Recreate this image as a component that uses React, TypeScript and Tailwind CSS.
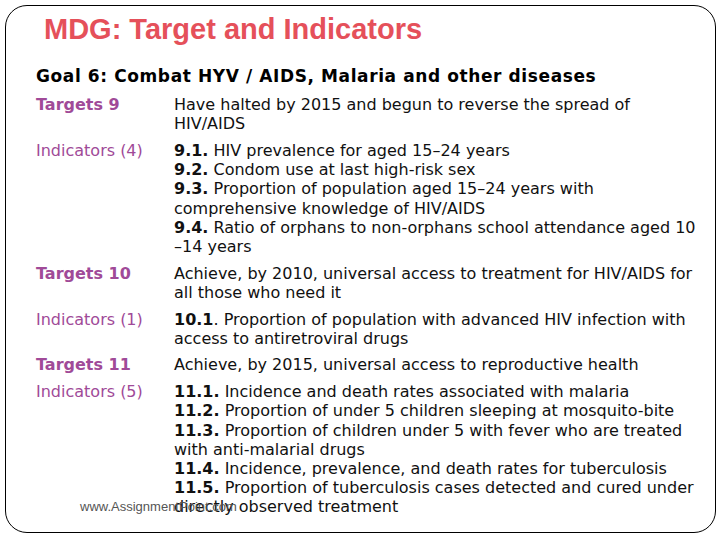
import React from "react";

type Row = {
  label: string;
  strong?: boolean;
  lines: React.ReactNode[];
};

const rows: Row[] = [
  {
    label: "Targets 9",
    strong: true,
    lines: ["Have halted by 2015 and begun to reverse the spread of", "HIV/AIDS"],
  },
  {
    label: "Indicators (4)",
    lines: [
      <><b>9.1.</b> HIV prevalence for aged 15–24 years</>,
      <><b>9.2.</b> Condom use at last high-risk sex</>,
      <><b>9.3.</b> Proportion of population aged 15–24 years with</>,
      "comprehensive knowledge of HIV/AIDS",
      <><b>9.4.</b> Ratio of orphans to non-orphans school attendance aged 10</>,
      "–14 years",
    ],
  },
  {
    label: "Targets 10",
    strong: true,
    lines: ["Achieve, by 2010, universal access to treatment for HIV/AIDS for", "all those who need it"],
  },
  {
    label: "Indicators (1)",
    lines: [
      <><b>10.1</b>. Proportion of population with advanced HIV infection with</>,
      "access to antiretroviral drugs",
    ],
  },
  {
    label: "Targets 11",
    strong: true,
    lines: ["Achieve, by 2015, universal access to reproductive health"],
  },
  {
    label: "Indicators (5)",
    lines: [
      <><b>11.1.</b> Incidence and death rates associated with malaria</>,
      <><b>11.2.</b> Proportion of under 5 children sleeping at mosquito-bite</>,
      <><b>11.3.</b> Proportion of children under 5 with fever who are treated</>,
      "with anti-malarial drugs",
      <><b>11.4.</b> Incidence, prevalence, and death rates for tuberculosis</>,
      <><b>11.5.</b> Proportion of tuberculosis cases detected and cured under</>,
      "directly observed treatment",
    ],
  },
];

export default function App() {
  return (
    <div className="w-[720px] h-[540px] bg-white p-[5px]">
      <div className="relative w-[711px] h-[528px] border border-black rounded-[22px]">
        {/* Title */}
        <h1 className="ml-[38px] mt-[6px] font-['Liberation_Sans',Arial,sans-serif] font-bold text-[29px] leading-[34px] text-[#e5505a]">
          MDG: Target and Indicators
        </h1>

        {/* Goal */}
        <h2 className="ml-[30px] mt-[20px] font-['DejaVu_Sans',Verdana,sans-serif] font-bold text-[17px] tracking-[0.6px] leading-[20px] text-black">
          Goal 6: Combat HYV / AIDS, Malaria and other diseases
        </h2>

        {/* Rows */}
        <div className="ml-[30px] mt-[9px] flex flex-col gap-[7.5px] font-['DejaVu_Sans',Verdana,sans-serif] text-[16px] leading-[19.2px]">
          {rows.map((row) => (
            <div key={row.label} className="flex">
              <div
                className={`w-[138px] shrink-0 text-[#a04a98] ${row.strong ? "font-bold" : ""}`}
              >
                {row.label}
              </div>
              <div className="text-[#111]">
                {row.lines.map((line, i) => (
                  <div key={i} className="whitespace-nowrap">
                    {line}
                  </div>
                ))}
              </div>
            </div>
          ))}
        </div>

        {/* Footer watermark */}
        <div className="absolute left-[74px] top-[491px] font-['Liberation_Sans',Arial,sans-serif] text-[13px] text-[#555]">
          www.AssignmentPoint.com
        </div>
      </div>
    </div>
  );
}
